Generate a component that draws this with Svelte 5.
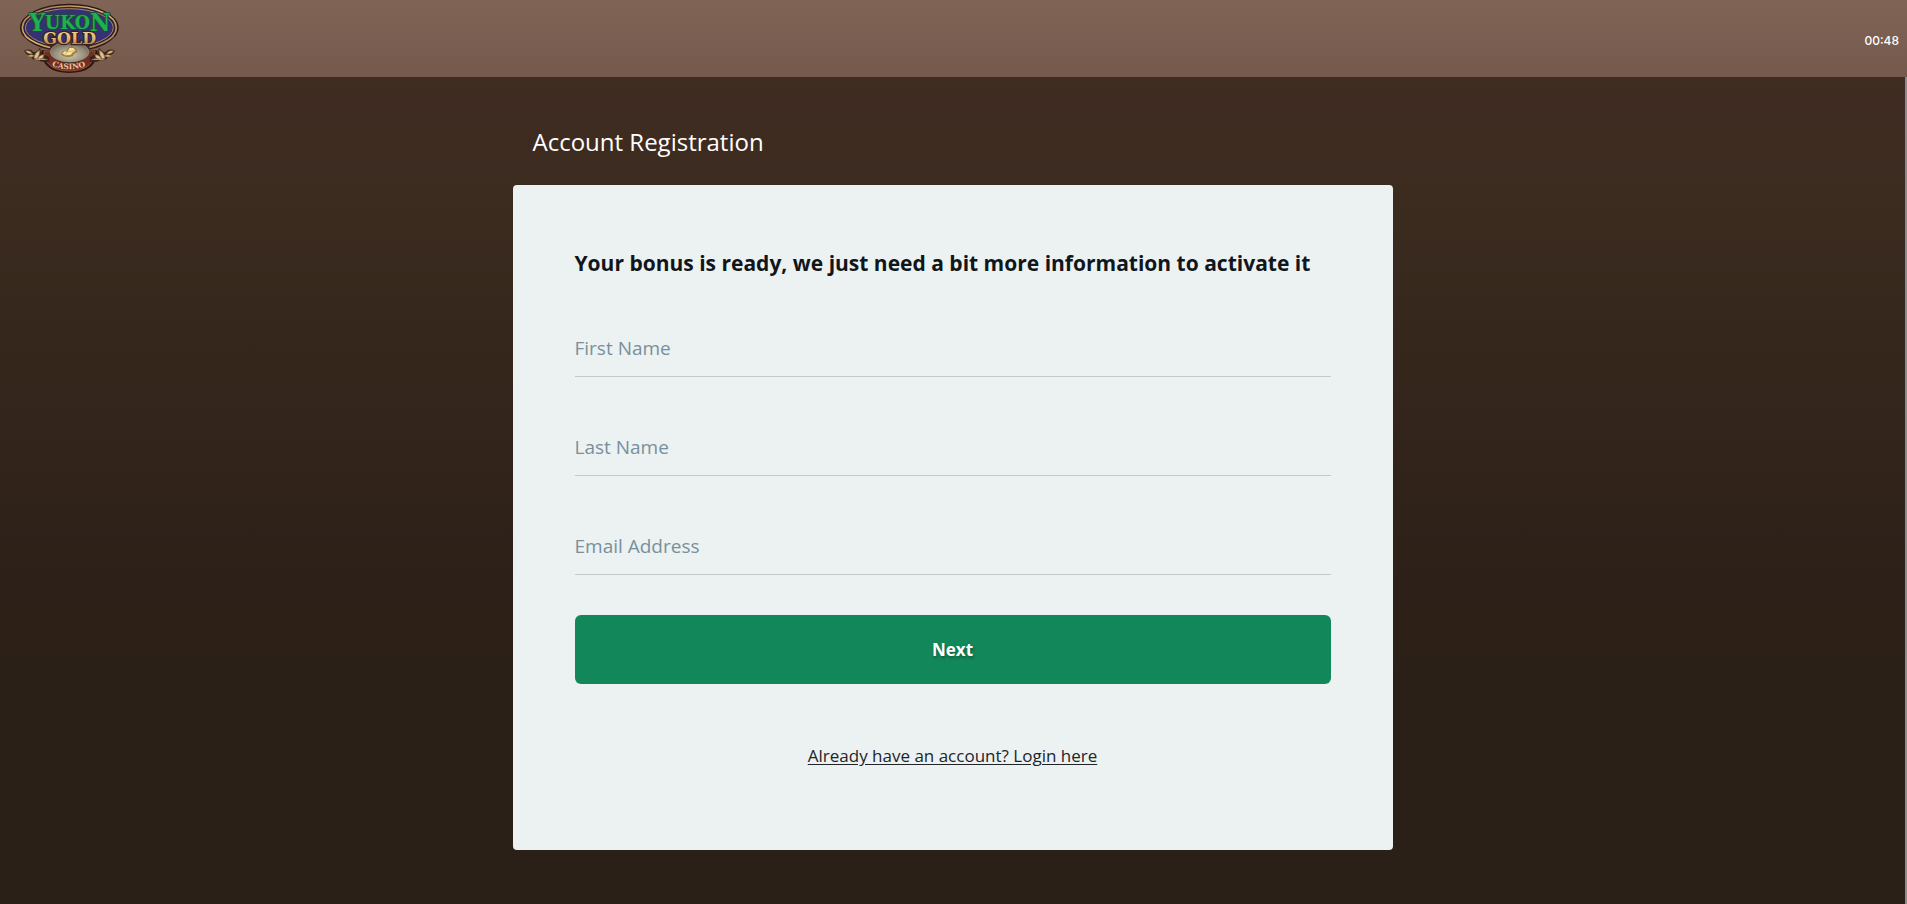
<script lang="ts">
  const fields = [
    { id: 'first-name', label: 'First Name', type: 'text' },
    { id: 'last-name', label: 'Last Name', type: 'text' },
    { id: 'email', label: 'Email Address', type: 'email' },
  ];

  let seconds = $state(48);
  let values = $state({ 'first-name': '', 'last-name': '', email: '' });

  let clock = $derived(
    String(Math.floor(seconds / 60)).padStart(2, '0') + ':' + String(seconds % 60).padStart(2, '0')
  );
</script>

<div class="page">
  <header class="topbar">
    <a href="/" class="logo" aria-label="Yukon Gold Casino">
      <svg viewBox="54 6 306 214" xmlns="http://www.w3.org/2000/svg">
        <defs>
          <linearGradient id="gold" x1="0" y1="0" x2="0" y2="1">
            <stop offset="0" stop-color="#f0d79c" />
            <stop offset="0.5" stop-color="#e2ba76" />
            <stop offset="1" stop-color="#9a683b" />
          </linearGradient>
          <linearGradient id="rim" x1="0" y1="0" x2="1" y2="1">
            <stop offset="0" stop-color="#9b7046" />
            <stop offset="0.45" stop-color="#d9b77d" />
            <stop offset="1" stop-color="#a97947" />
          </linearGradient>
          <radialGradient id="pan" cx="0.5" cy="0.65" r="0.65">
            <stop offset="0" stop-color="#d2cbb4" />
            <stop offset="0.65" stop-color="#918b79" />
            <stop offset="1" stop-color="#625a4c" />
          </radialGradient>
          <path id="casino-arc" d="M155 195 Q208 216 268 192" />
        </defs>

        <!-- red ribbon below the oval -->
        <path d="M124 148 Q124 216 208 216 Q291 216 293 148 Z" fill="#30150f" />
        <path d="M132 150 Q133 209 208 210 Q283 209 285 150 Z" fill="#722e23" stroke="#a36b43" stroke-width="2" />

        <!-- main oval -->
        <ellipse cx="208" cy="80" rx="148" ry="72" fill="#2d1715" />
        <ellipse cx="208" cy="80" rx="141" ry="65" fill="#29223e" stroke="url(#rim)" stroke-width="5" />
        <ellipse cx="208" cy="80" rx="132" ry="57" fill="#343273" stroke="#b48756" stroke-width="3" />

        <!-- leaves -->
        {#each ['', 'translate(417 0) scale(-1 1)'] as side}
          <g transform={side}>
            <path
              d="M72 149 Q90 141 100 153 Q110 156 121 139 Q120 153 127 158 L149 169 L147 182 Q126 185 112 177 L102 178 Q94 172 92 164 Q78 162 72 149 Z"
              fill="#39231a"
            />
            <path
              d="M76 150 Q90 146 97 158 Q84 161 76 150 M82 165 Q94 158 104 164 Q94 171 82 165 M102 172 Q102 157 119 147 Q120 162 111 173 M112 175 Q118 161 132 161 Q132 171 119 178 M100 177 Q124 169 143 176"
              fill="#dec292"
              stroke="#8a6039"
              stroke-width="2"
            />
          </g>
        {/each}

        <!-- gold pan with nuggets -->
        <path d="M151 129 H268 Q275 184 209 187 Q144 184 151 129 Z" fill="#3b2820" />
        <ellipse cx="209" cy="153" rx="58" ry="30" fill="url(#pan)" stroke="#b29873" stroke-width="2" />
        <path d="M182 159 L190 150 L199 149 L207 137 L220 137 L230 145 L233 153 L222 158 L219 166 L205 169 L190 166 Z" fill="#a67c3a" />
        <path d="M187 157 L194 151 L202 152 L209 141 L220 141 L227 149 L217 155 L212 162 L195 163 Z" fill="#f4e4a0" />
        <path d="M202 152 L212 151 L225 149 M195 162 L202 152" fill="none" stroke="#c29a50" stroke-width="2" />

        <text x="209" y="90" class="yukon" text-anchor="middle"
          ><tspan font-size="74">Y</tspan><tspan dy="-6">UKO</tspan><tspan dy="6" font-size="74">N</tspan></text
        >
        <text x="209" y="128" class="gold" text-anchor="middle">GOLD</text>
        <text class="casino"><textPath href="#casino-arc">CASINO</textPath></text>
      </svg>
    </a>
    <time class="clock">{clock}</time>
  </header>

  <div class="content">
    <main>
      <h1>Account Registration</h1>
      <form class="card" onsubmit={(e) => e.preventDefault()}>
        <h2>Your bonus is ready, we just need a bit more information to activate it</h2>
        {#each fields as field}
          <div class="field">
            <label for={field.id} class:hidden={values[field.id]}>{field.label}</label>
            <input id={field.id} type={field.type} bind:value={values[field.id]} />
          </div>
        {/each}
        <button type="submit">Next</button>
        <a href="/login" class="login">Already have an account? Login here</a>
      </form>
    </main>
  </div>
</div>

<style>
  :global(body) {
    margin: 0;
    background: #2b2017;
  }

  .page {
    display: flex;
    flex-direction: column;
    min-height: 100vh;
    font-family: 'Open Sans', 'Noto Sans', sans-serif;
  }

  .topbar {
    display: flex;
    align-items: center;
    justify-content: space-between;
    height: 77px;
    padding: 0 8px 0 18px;
    box-sizing: border-box;
    background: linear-gradient(#806557, #74594c);
  }

  .logo {
    display: block;
    width: 102px;
  }

  .logo svg {
    display: block;
    width: 100%;
  }

  .yukon {
    font: bold 58px 'DejaVu Serif Condensed', 'DejaVu Serif', serif;
    fill: #20b050;
    stroke: #155232;
    stroke-width: 5px;
    paint-order: stroke;
  }

  .gold {
    font: bold 48px 'DejaVu Serif', serif;
    fill: url(#gold);
    stroke: #3c2019;
    stroke-width: 7px;
    paint-order: stroke;
  }

  .casino {
    font: bold 23px 'DejaVu Serif', serif;
    fill: #e3c7a0;
  }

  .clock {
    margin-top: 4px;
    color: #fff;
    font: 500 12px/20px Inter, sans-serif;
  }

  .content {
    flex: 1;
    padding: 45px 0 54px;
    border-right: 2px solid #8b8b8b;
    background: linear-gradient(#402c22, #3b2b1f 16%, #33251b 40%, #2d2018 62%, #2b2017 75%);
  }

  main {
    max-width: 880px;
    margin: 0 auto;
  }

  h1 {
    margin: 0 20px 23px;
    color: #fff;
    font-size: 24px;
    font-weight: 400;
    line-height: 40px;
  }

  .card {
    display: flex;
    flex-direction: column;
    padding: 62px 62px 80px;
    border-radius: 4px;
    background: #ecf1f2;
  }

  h2 {
    margin: 0 0 32px;
    color: #101619;
    font-size: 21px;
    font-weight: 700;
    line-height: 32px;
  }

  .field {
    display: grid;
    height: 66px;
    margin-bottom: 33px;
    box-sizing: border-box;
    border-bottom: 1px solid #c4c9ca;
  }

  .field label,
  .field input {
    grid-area: 1 / 1;
    padding: 9px 0 0;
    font: 19px/56px 'Open Sans', 'Noto Sans', sans-serif;
  }

  .field label {
    height: 56px;
    color: #78909c;
    pointer-events: none;
  }

  .field label.hidden {
    visibility: hidden;
  }

  .field input {
    min-width: 0;
    border: 0;
    outline: 0;
    background: transparent;
    color: #101619;
  }

  button {
    height: 69px;
    margin-top: 7px;
    border: 0;
    border-radius: 6px;
    background: #11875a;
    color: #fff;
    font: 700 17px/24px 'Open Sans', 'Noto Sans', sans-serif;
    text-shadow: 1px 2px 3px rgba(0, 0, 0, 0.3);
    cursor: pointer;
  }

  .login {
    align-self: center;
    margin-top: 58px;
    color: #212529;
    font-size: 17px;
    line-height: 28px;
    text-underline-offset: 2px;
  }
</style>
